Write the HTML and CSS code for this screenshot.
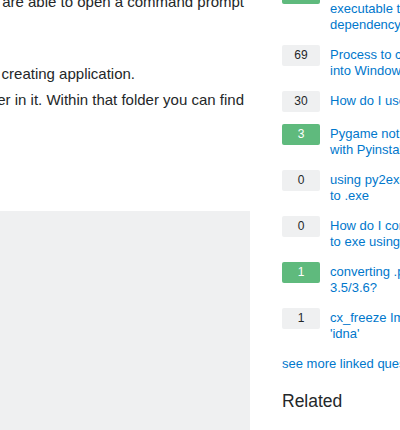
FILE: index.html
```html
<!DOCTYPE html>
<html lang="en">
<head>
<meta charset="utf-8">
<title>Linked questions</title>
<link rel="stylesheet" href="styles.css">
</head>
<body>
<div class="page">
  <div class="main">
    <p class="line line-1">Once you have installed the package and you are able to open a command prompt</p>
    <p class="line line-2">3. Go to the folder where you are creating application.</p>
    <p class="line line-3">4. You will see a dist folder in it. Within that folder you can find</p>
    <pre class="code"><code> </code></pre>
  </div>
  <aside class="sidebar">
    <div class="linked">
      <div class="item">
        <span class="votes accepted">58</span>
        <a class="qlink" href="#">How to make a Python script standalone<br>executable to run without ANY<br>dependency?</a>
      </div>
      <div class="item">
        <span class="votes">69</span>
        <a class="qlink" href="#">Process to convert simple Python script<br>into Windows executable</a>
      </div>
      <div class="item">
        <span class="votes">30</span>
        <a class="qlink" href="#">How do I use cx_freeze?</a>
      </div>
      <div class="item">
        <span class="votes accepted">3</span>
        <a class="qlink" href="#">Pygame not loading png after making .exe<br>with Pyinstaller</a>
      </div>
      <div class="item">
        <span class="votes">0</span>
        <a class="qlink" href="#">using py2exe to convert python script<br>to .exe</a>
      </div>
      <div class="item">
        <span class="votes">0</span>
        <a class="qlink" href="#">How do I convert a python script<br>to exe using pyinstaller?</a>
      </div>
      <div class="item">
        <span class="votes accepted">1</span>
        <a class="qlink" href="#">converting .py to .exe for Python<br>3.5/3.6?</a>
      </div>
      <div class="item">
        <span class="votes">1</span>
        <a class="qlink" href="#">cx_freeze ImportError: No module named<br>'idna'</a>
      </div>
    </div>
    <a class="see-more" href="#">see more linked questions…</a>
    <h4 class="related">Related</h4>
  </aside>
</div>
</body>
</html>
```

FILE: styles.css
```css
html, body {
  margin: 0;
  padding: 0;
  background: #ffffff;
}

body {
  width: 400px;
  height: 430px;
  overflow: hidden;
  font-family: "Liberation Sans", Arial, sans-serif;
  color: #242729;
}

.page {
  display: flex;
  align-items: flex-start;
  gap: 32px;
  height: 430px;
  overflow: hidden;
}

.main {
  width: 250px;
  flex-shrink: 0;
  margin-top: -8px;
}

.line {
  display: flex;
  justify-content: flex-end;
  overflow: hidden;
  white-space: nowrap;
  margin: 0;
  font-size: 15px;
  line-height: 20px;
}

.line-1 {
  padding-right: 6px;
}

.line-2 {
  margin-top: 52px;
  padding-right: 115px;
}

.line-3 {
  margin-top: 6px;
  padding-right: 6px;
}

.code {
  margin: 101px 0 0;
  height: 227px;
  background: #eff0f1;
}

.sidebar {
  width: 118px;
  flex-shrink: 0;
  margin-top: -17px;
  overflow: hidden;
}

.item {
  display: flex;
  align-items: flex-start;
  gap: 10px;
  margin-bottom: 12px;
}

.votes {
  width: 38px;
  height: 21px;
  flex-shrink: 0;
  line-height: 21px;
  font-size: 12px;
  text-align: center;
  border-radius: 2px;
  background: #eff0f1;
  color: #242729;
}

.votes.accepted {
  background: #5fba7d;
  color: #ffffff;
}

.qlink {
  padding-top: 2px;
  font-size: 13px;
  line-height: 16px;
  color: #0077cc;
  text-decoration: none;
  white-space: nowrap;
}

.see-more {
  display: block;
  font-size: 13px;
  line-height: 20px;
  color: #0077cc;
  text-decoration: none;
  white-space: nowrap;
}

.related {
  margin: 16px 0 0;
  font-size: 17.5px;
  font-weight: normal;
  line-height: 23px;
  color: #242729;
}
```
